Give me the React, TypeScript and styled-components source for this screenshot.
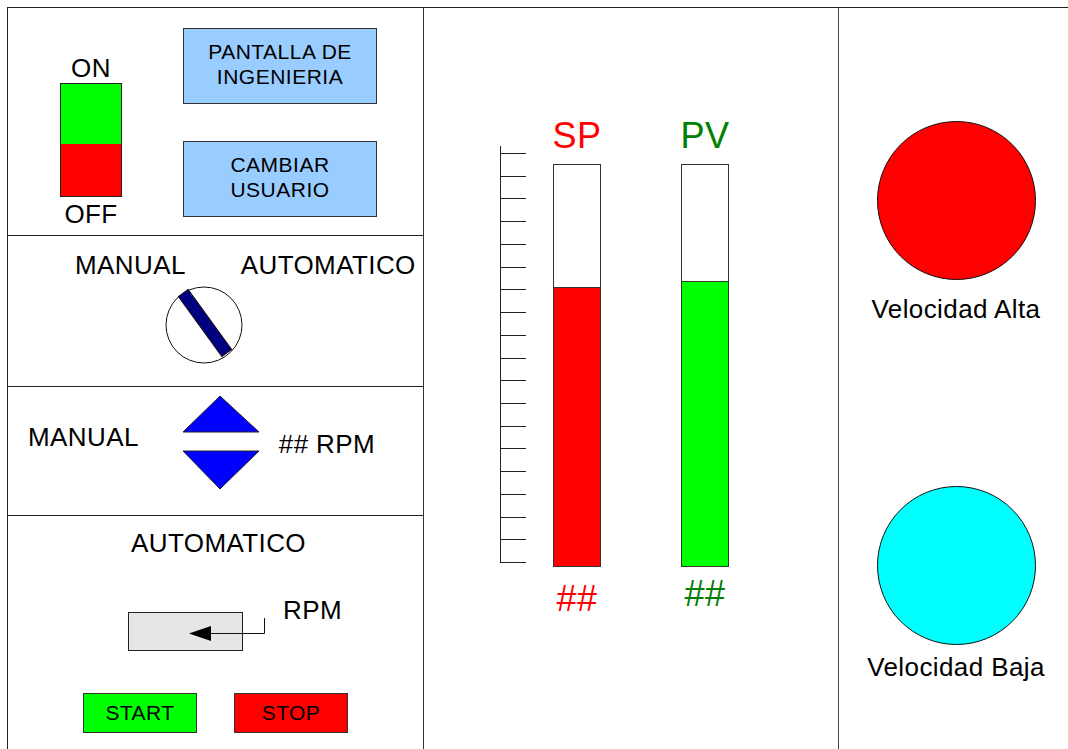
import React from 'react';
import styled, { createGlobalStyle } from 'styled-components';

const GlobalStyle = createGlobalStyle`
  html, body {
    margin: 0;
    padding: 0;
    background: #ffffff;
  }
  body {
    font-family: "Liberation Sans", Arial, sans-serif;
    color: #000000;
  }
`;

const Screen = styled.div`
  display: grid;
  grid-template-columns: 416px 415px 1fr;
  height: 742px;
  margin: 7px 0 0 7px;
  border-top: 1px solid #222;
  border-left: 1px solid #222;
  overflow: hidden;
`;

const Column = styled.div`
  display: flex;
  flex-direction: column;
  border-right: 1px solid #333;
`;

const Section = styled.div<{ $h?: number; $stack?: boolean }>`
  display: flex;
  flex-direction: ${(p) => (p.$stack || !p.$h ? 'column' : 'row')};
  align-items: flex-start;
  height: ${(p) => (p.$h ? `${p.$h}px` : 'auto')};
  flex: ${(p) => (p.$h ? 'none' : '1')};
  border-bottom: ${(p) => (p.$h ? '1px solid #222' : 'none')};
  box-sizing: border-box;
`;

const Label = styled.div<{ $size?: number; $color?: string; $top?: number; $left?: number }>`
  font-size: ${(p) => p.$size ?? 26}px;
  line-height: ${(p) => p.$size ?? 26}px;
  letter-spacing: 0.4px;
  color: ${(p) => p.$color ?? '#000'};
  margin-top: ${(p) => p.$top ?? 0}px;
  margin-left: ${(p) => p.$left ?? 0}px;
  white-space: nowrap;
`;

const ToggleGroup = styled.div`
  display: flex;
  flex-direction: column;
  align-items: center;
  margin: 47px 0 0 52px;
  width: 62px;
`;

const Toggle = styled.div`
  display: flex;
  flex-direction: column;
  width: 60px;
  border: 1px solid #222;
  margin: 2px 0 4px;
`;

const ToggleHalf = styled.div<{ $on?: boolean }>`
  height: ${(p) => (p.$on ? 60 : 52)}px;
  background: ${(p) => (p.$on ? '#00ff00' : '#ff0000')};
`;

const ButtonStack = styled.div`
  display: flex;
  flex-direction: column;
  gap: 37px;
  margin: 20px 0 0 61px;
`;

const NavButton = styled.div`
  display: flex;
  align-items: center;
  justify-content: center;
  width: 194px;
  height: 76px;
  padding-bottom: 4px;
  box-sizing: border-box;
  background: #99ccff;
  border: 1px solid #333;
  font-size: 21px;
  line-height: 25px;
  letter-spacing: 0.5px;
  text-align: center;
`;

const LabelRow = styled.div`
  display: flex;
  gap: 55px;
  margin: 16px 0 0 67px;
`;

const Knob = styled.svg`
  display: block;
  margin: 8px 0 0 157px;
`;

const Arrows = styled.svg`
  display: block;
  flex: none;
  margin: 8px 0 0 43px;
`;

const Title = styled.div`
  align-self: stretch;
  text-align: center;
  padding: 14px 0 0 6px;
  font-size: 26px;
  line-height: 26px;
  letter-spacing: 0.4px;
`;

const InputRow = styled.div`
  display: flex;
  align-items: flex-start;
  margin: 41px 0 0 120px;
`;

const InputBox = styled.div`
  position: relative;
  width: 115px;
  height: 39px;
  margin-top: 15px;
  box-sizing: border-box;
  background: #e6e6e6;
  border: 1px solid #222;
`;

const ArrowMark = styled.svg`
  position: absolute;
  left: 60px;
  top: 5px;
  overflow: visible;
`;

const ActionRow = styled.div`
  display: flex;
  gap: 37px;
  margin: 42px 0 0 75px;
`;

const ActionButton = styled.div<{ $color: string }>`
  display: flex;
  align-items: center;
  justify-content: center;
  width: 114px;
  height: 40px;
  box-sizing: border-box;
  background: ${(p) => p.$color};
  border: 1px solid #333;
  font-size: 21px;
  letter-spacing: 0.4px;
`;

const GaugePanel = styled.div`
  display: flex;
  align-items: flex-start;
  padding-left: 76px;
  border-right: 1px solid #444;
`;

const Scale = styled.svg`
  display: block;
  flex: none;
  margin-top: 138px;
`;

const Gauge = styled.div<{ $left: number }>`
  display: flex;
  flex-direction: column;
  align-items: center;
  width: 48px;
  margin: 110px 0 0 ${(p) => p.$left}px;
`;

const Bar = styled.div`
  display: flex;
  flex-direction: column;
  justify-content: flex-end;
  width: 48px;
  height: 403px;
  margin-top: 10px;
  box-sizing: border-box;
  border: 1px solid #333;
  background: #ffffff;
`;

const Fill = styled.div<{ $color: string }>`
  background: ${(p) => p.$color};
  border-top: 1px solid #333;
`;

const LampPanel = styled.div`
  display: flex;
  flex-direction: column;
  align-items: center;
  padding: 113px 0 0 5px;
`;

const Lamp = styled.div<{ $color: string; $top?: number }>`
  width: 159px;
  height: 159px;
  box-sizing: border-box;
  border-radius: 50%;
  border: 1px solid #111;
  background: ${(p) => p.$color};
  margin-top: ${(p) => p.$top ?? 0}px;
`;

const ticks = Array.from({ length: 19 }, (_, i) => 7 + i * (409 / 18));

function Gauges() {
  const bars = [
    { name: 'SP', color: '#ff0000', text: '#ff0000', level: 69.3, left: 26, valueTop: 14 },
    { name: 'PV', color: '#00ff00', text: '#008000', level: 70.8, left: 80, valueTop: 9 },
  ];
  return (
    <GaugePanel>
      <Scale width={27} height={418}>
        <line x1={0.5} y1={0} x2={0.5} y2={417} stroke="#222" />
        {ticks.map((y) => (
          <line key={y} x1={0} y1={Math.round(y) + 0.5} x2={26} y2={Math.round(y) + 0.5} stroke="#222" />
        ))}
      </Scale>
      {bars.map((b) => (
        <Gauge key={b.name} $left={b.left}>
          <Label $size={36} $color={b.text}>{b.name}</Label>
          <Bar>
            <Fill $color={b.color} style={{ height: `${b.level}%` }} />
          </Bar>
          <Label $size={36} $color={b.text} $top={b.valueTop}>##</Label>
        </Gauge>
      ))}
    </GaugePanel>
  );
}

export default function App() {
  return (
    <>
      <GlobalStyle />
      <Screen>
        <Column>
          <Section $h={228}>
            <ToggleGroup>
              <Label>ON</Label>
              <Toggle>
                <ToggleHalf $on />
                <ToggleHalf />
              </Toggle>
              <Label>OFF</Label>
            </ToggleGroup>
            <ButtonStack>
              <NavButton>PANTALLA DE<br />INGENIERIA</NavButton>
              <NavButton>CAMBIAR<br />USUARIO</NavButton>
            </ButtonStack>
          </Section>

          <Section $h={151} $stack>
            <LabelRow>
              <Label>MANUAL</Label>
              <Label>AUTOMATICO</Label>
            </LabelRow>
            <Knob width={78} height={78}>
              <circle cx={39} cy={39} r={38} fill="#fff" stroke="#111" />
              <rect
                x={-6}
                y={-37}
                width={12}
                height={74}
                fill="#000080"
                stroke="#111"
                transform="translate(40 37) rotate(-36)"
              />
            </Knob>
          </Section>

          <Section $h={129}>
            <Label $top={37} $left={20}>MANUAL</Label>
            <Arrows width={78} height={96}>
              <polygon points="38,1 1,37 77,37" fill="#0000ff" stroke="#222" />
              <polygon points="1,56 77,56 38,94" fill="#0000ff" stroke="#222" />
            </Arrows>
            <Label $top={44} $left={19}>## RPM</Label>
          </Section>

          <Section>
            <Title>AUTOMATICO</Title>
            <InputRow>
              <InputBox>
                <ArrowMark width={78} height={24}>
                  <polyline points="75.5,0 75.5,15.5 22,15.5" fill="none" stroke="#111" />
                  <polygon points="0,15.5 22,8 22,23" fill="#000" />
                </ArrowMark>
              </InputBox>
              <Label $left={40}>RPM</Label>
            </InputRow>
            <ActionRow>
              <ActionButton $color="#00ff00">START</ActionButton>
              <ActionButton $color="#ff0000">STOP</ActionButton>
            </ActionRow>
          </Section>
        </Column>

        <Gauges />

        <LampPanel>
          <Lamp $color="#ff0000" />
          <Label $top={16}>Velocidad Alta</Label>
          <Lamp $color="#00ffff" $top={164} />
          <Label $top={9}>Velocidad Baja</Label>
        </LampPanel>
      </Screen>
    </>
  );
}
